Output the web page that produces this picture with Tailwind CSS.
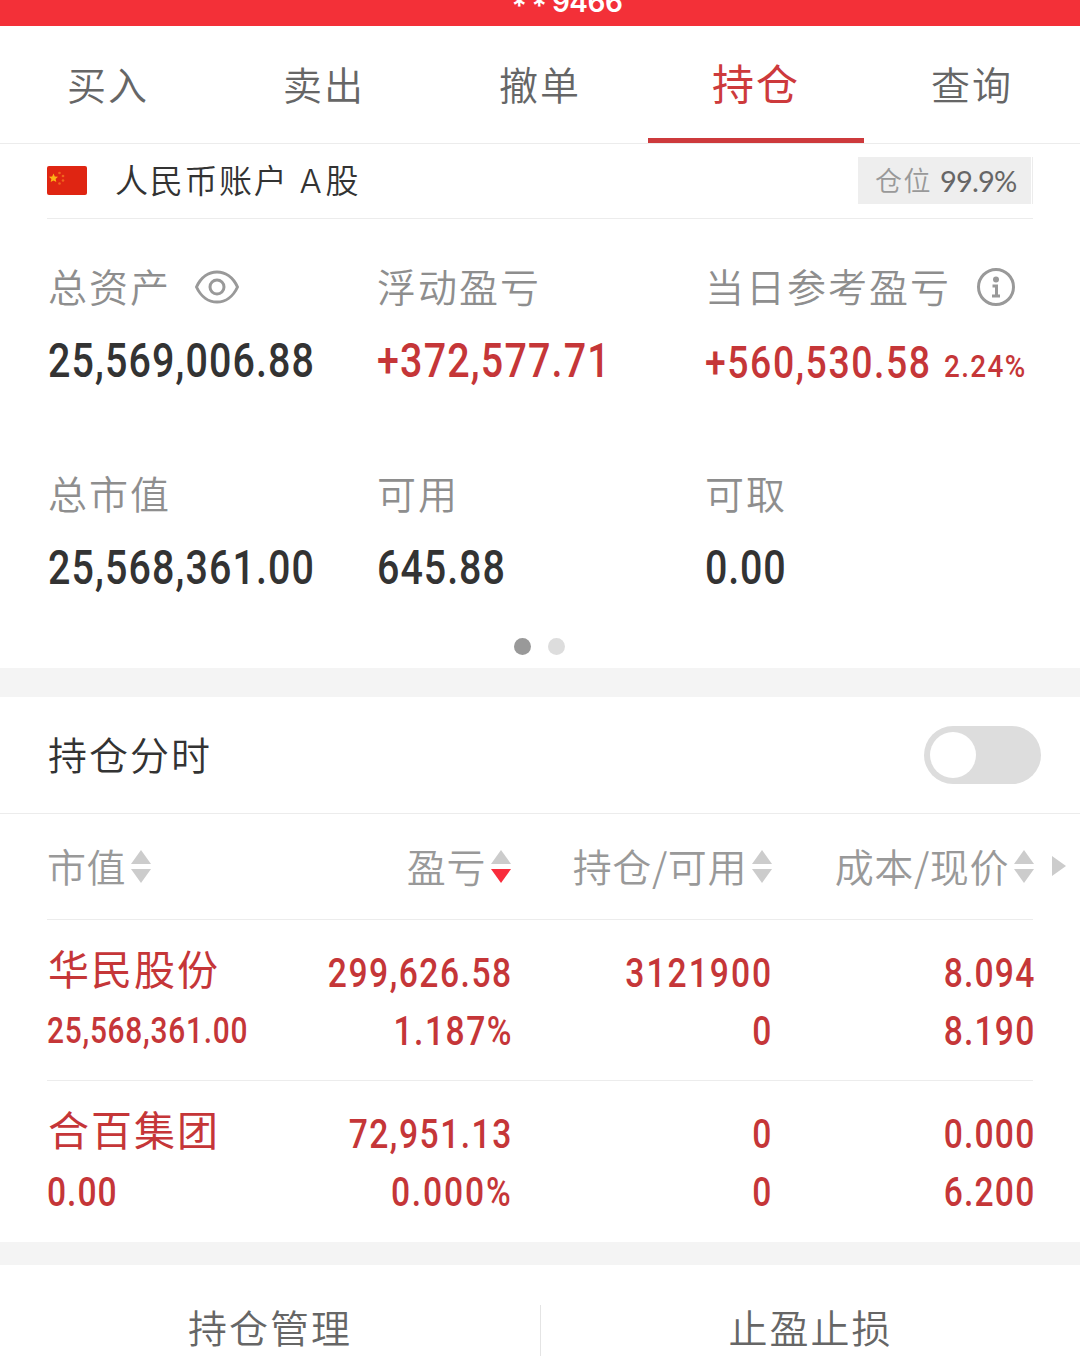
<!DOCTYPE html>
<html lang="zh-CN">

<head>
    <meta charset="UTF-8">
    <meta name="viewport" content="width=device-width, initial-scale=1.0">
    <script src="https://cdn.jsdelivr.net/npm/@tailwindcss/browser@4"></script>
    <title>持仓</title>
</head>

<body class="w-[1080px] h-[1356px] overflow-hidden bg-white font-['Noto_Sans_CJK_SC',sans-serif] font-[350] text-[#333]">
    <!-- Account bar, scrolled almost out of view -->
    <header class="h-[26px] bg-[#f33038] flex justify-center items-end overflow-hidden">
        <div class="flex h-12 leading-[48px] pl-[54px] text-[28px] font-['Inter',sans-serif] font-semibold text-white"><span class="mt-1 tracking-[5px]">**</span><span class="tracking-[-0.500px]">9466</span></div>
    </header>

    <!-- Tabs -->
    <nav class="grid grid-cols-5 h-[118px] border-b border-[#ececec] text-center text-[39px] tracking-[2px] leading-[114px] text-[#666]">
        <a>买入</a>
        <a>卖出</a>
        <a>撤单</a>
        <a class="border-b-[5px] border-[#cd3a3c] text-[42px] leading-[112px] font-normal text-[#cd3a3c]">持仓</a>
        <a>查询</a>
    </nav>

    <!-- Account -->
    <section class="mx-[47px] h-[75px] border-b border-[#ececec] flex items-center">
        <svg class="w-10 h-[29px] mt-[-2px]" viewBox="0 0 40 29">
            <rect width="40" height="29" rx="2" fill="#df2512" />
            <path d="M6.500 7.500l1.300 3 3.200.3-2.400 2.100.7 3.200-2.800-1.700-2.800 1.700.7-3.200L2 10.800l3.200-.3z" fill="#fcb316" />
            <g fill="#f0641e">
                <circle cx="12.500" cy="7" r="1.300" />
                <circle cx="16" cy="10" r="1.300" />
                <circle cx="16" cy="14.500" r="1.300" />
                <circle cx="12.500" cy="17.500" r="1.300" />
            </g>
        </svg>
        <h1 class="ml-7 text-[33px] tracking-[1.700px] leading-[70px] mt-[-2px]">人民币账户 <span class="ml-0.5 mr-0.5 font-['Inter',sans-serif]">A</span>股</h1>
        <div class="ml-auto mt-[-2px] h-[47px] w-[175px] border-r border-[#ececec] pr-px">
            <div class="h-full bg-[#eee] flex items-center pl-[17px]">
                <span class="text-[27px] tracking-[1.500px] leading-[44px] text-[#999]">仓位</span>
                <span class="ml-2 text-[29px] font-['Lato',sans-serif] font-normal leading-[47px] tracking-[-0.800px] text-[#666]">99.9%</span>
            </div>
        </div>
    </section>

    <!-- Assets -->
    <section class="h-[449px] pl-12 pt-9 relative">
        <div class="grid grid-cols-[329px_328px_1fr] gap-y-[59px]">
            <div>
                <h2 class="flex items-center h-[60px] mb-1 text-[39px] tracking-[2px] leading-[60px] text-[#8e8e8e]">总资产
                    <svg class="ml-6 mt-1 w-11 h-9" viewBox="0 0 44 36" fill="none" stroke="#999" stroke-width="3">
                        <path d="M1.500 18C6 8 14 3 22 3s16 5 20.500 15c-4.500 10-12.500 15-20.500 15S6 28 1.500 18z" />
                        <circle cx="22" cy="18" r="7" />
                    </svg>
                </h2>
                <p class="h-[84px] leading-[84px] text-[47.500px] tracking-[0.028em] font-['Roboto',sans-serif] font-medium"><span class="inline-block origin-left scale-x-[0.83]">25,569,006.88</span></p>
            </div>
            <div>
                <h2 class="h-16 text-[39px] tracking-[2px] leading-[60px] text-[#8e8e8e]">浮动盈亏</h2>
                <p class="h-[84px] leading-[84px] text-[47.500px] tracking-[0.03em] font-['Roboto',sans-serif] font-medium text-[#c53638]"><span class="inline-block origin-left scale-x-[0.83]">+372,577.71</span></p>
            </div>
            <div>
                <h2 class="flex items-center h-[60px] mb-1 text-[39px] tracking-[2px] leading-[60px] text-[#8e8e8e]">当日参考盈亏
                    <svg class="ml-[25px] mt-1 w-10 h-10" viewBox="0 0 40 40" fill="none" stroke="#999" stroke-width="3">
                        <circle cx="20" cy="20" r="17.500" />
                        <circle cx="20" cy="12.500" r="3" fill="#999" stroke="none" />
                        <path d="M16.500 19h4V28M16 29h8" />
                    </svg>
                </h2>
                <p class="flex h-[84px] leading-[88px] whitespace-nowrap font-['Roboto',sans-serif] font-medium text-[#c53638]">
                    <span class="w-[239px] text-[45px] tracking-[0.042em]"><span class="inline-block origin-left scale-x-[0.83]">+560,530.58</span></span>
                    <span class="text-[32px] leading-[95px] tracking-[0.05em]"><span class="inline-block origin-left scale-x-[0.87]">2.24%</span></span>
                </p>
            </div>
            <div>
                <h2 class="h-16 text-[39px] tracking-[2px] leading-[60px] text-[#8e8e8e]">总市值</h2>
                <p class="h-[84px] leading-[84px] text-[47.500px] tracking-[0.028em] font-['Roboto',sans-serif] font-medium"><span class="inline-block origin-left scale-x-[0.83]">25,568,361.00</span></p>
            </div>
            <div>
                <h2 class="h-16 text-[39px] tracking-[2px] leading-[60px] text-[#8e8e8e]">可用</h2>
                <p class="h-[84px] leading-[84px] text-[47.500px] tracking-[0.025em] font-['Roboto',sans-serif] font-medium"><span class="inline-block origin-left scale-x-[0.83]">645.88</span></p>
            </div>
            <div>
                <h2 class="h-16 text-[39px] tracking-[2px] leading-[60px] text-[#8e8e8e]">可取</h2>
                <p class="h-[84px] leading-[84px] text-[47.500px] tracking-[0.02em] font-['Roboto',sans-serif] font-medium"><span class="inline-block origin-left scale-x-[0.83]">0.00</span></p>
            </div>
        </div>
        <!-- Pager dots -->
        <div class="absolute left-[514px] bottom-[13px] flex gap-[17px]">
            <i class="size-[17px] rounded-full bg-[#999]"></i>
            <i class="size-[17px] rounded-full bg-[#ddd]"></i>
        </div>
    </section>

    <div class="h-[29px] bg-[#f4f4f4]"></div>

    <!-- Intraday switch -->
    <section class="h-[117px] border-b border-[#ececec] pl-12 pr-[39px] flex items-center justify-between">
        <h2 class="text-[39px] tracking-[2px] leading-[112px] mt-[-4px]">持仓分时</h2>
        <button class="w-[117px] h-[58px] rounded-full bg-[#ddd] p-1.5"><i class="block size-[46px] rounded-full bg-white"></i></button>
    </section>

    <!-- Positions -->
    <section class="h-[428px]">
        <div class="h-[106px] mx-[47px] border-b border-[#ececec] grid grid-cols-[200px_264px_261px_262px] text-[39px] tracking-[0.600px] leading-[102px] text-[#999]">
            <div class="flex items-center"><span class="-mt-1">市值</span>
                <svg class="ml-[5px] w-5 h-[34px]" viewBox="0 0 20 34" fill="#ccc"><path d="M10 0l10 14H0z" /><path d="M0 19h20L10 33z" /></svg>
            </div>
            <div class="flex items-center justify-end"><span class="-mt-1">盈亏</span>
                <svg class="ml-[5px] w-5 h-[34px]" viewBox="0 0 20 34" fill="#ccc"><path d="M10 0l10 14H0z" /><path d="M0 19h20L10 33z" fill="#f92c3c" /></svg>
            </div>
            <div class="flex items-center justify-end"><span class="-mt-1">持仓/可用</span>
                <svg class="ml-[5px] w-5 h-[34px]" viewBox="0 0 20 34" fill="#ccc"><path d="M10 0l10 14H0z" /><path d="M0 19h20L10 33z" /></svg>
            </div>
            <div class="relative flex items-center justify-end"><span class="-mt-1">成本/现价</span>
                <svg class="ml-[5px] w-5 h-[34px]" viewBox="0 0 20 34" fill="#ccc"><path d="M10 0l10 14H0z" /><path d="M0 19h20L10 33z" /></svg>
                <svg class="absolute left-full top-[42px] ml-[18px] w-3.5 h-5" viewBox="0 0 14 20" fill="#ccc"><path d="M0 0l14 10L0 20z" /></svg>
            </div>
        </div>

        <div class="h-[161px] mx-[47px] border-b border-[#ececec] pt-6 grid grid-cols-[202px_264px_260px_262px] grid-rows-[58px_58px] text-[40.500px] tracking-[0.045em] leading-[58px] whitespace-nowrap text-right font-['Roboto',sans-serif] font-medium text-[#c53638]">
            <div class="pl-px text-left text-[41px] tracking-[2px] leading-[46px] font-['Noto_Sans_CJK_SC',sans-serif] font-normal">华民股份</div>
            <div><span class="inline-block origin-right scale-x-[0.83]">299,626.58</span></div>
            <div><span class="inline-block origin-right scale-x-[0.83] tracking-[0.06em]">3121900</span></div>
            <div><span class="inline-block origin-right scale-x-[0.83] tracking-[0.035em]">8.094</span></div>
            <div class="text-left text-[36px] tracking-[0.025em]"><span class="inline-block origin-left scale-x-[0.83]">25,568,361.00</span></div>
            <div><span class="inline-block origin-right scale-x-[0.83]">1.187%</span></div>
            <div><span class="inline-block origin-right scale-x-[0.83]">0</span></div>
            <div><span class="inline-block origin-right scale-x-[0.83] tracking-[0.035em]">8.190</span></div>
        </div>

        <div class="h-[161px] mx-[47px] pt-6 grid grid-cols-[202px_264px_260px_262px] grid-rows-[58px_58px] text-[40.500px] tracking-[0.045em] leading-[58px] whitespace-nowrap text-right font-['Roboto',sans-serif] font-medium text-[#c53638]">
            <div class="pl-px text-left text-[41px] tracking-[2px] leading-[46px] font-['Noto_Sans_CJK_SC',sans-serif] font-normal">合百集团</div>
            <div><span class="inline-block origin-right scale-x-[0.83]">72,951.13</span></div>
            <div><span class="inline-block origin-right scale-x-[0.83]">0</span></div>
            <div><span class="inline-block origin-right scale-x-[0.83] tracking-[0.035em]">0.000</span></div>
            <div class="text-left tracking-[0.03em]"><span class="inline-block origin-left scale-x-[0.83]">0.00</span></div>
            <div><span class="inline-block origin-right scale-x-[0.83] tracking-[0.055em]">0.000%</span></div>
            <div><span class="inline-block origin-right scale-x-[0.83]">0</span></div>
            <div><span class="inline-block origin-right scale-x-[0.83] tracking-[0.035em]">6.200</span></div>
        </div>
    </section>

    <div class="h-[23px] bg-[#f4f4f4]"></div>

    <!-- Bottom actions -->
    <footer class="h-[91px] pt-10 grid grid-cols-2 text-center text-[39px] tracking-[2px] leading-[42px] text-[#666]">
        <a>持仓管理</a>
        <a class="border-l border-[#e4e4e4]">止盈止损</a>
    </footer>
</body>

</html>
